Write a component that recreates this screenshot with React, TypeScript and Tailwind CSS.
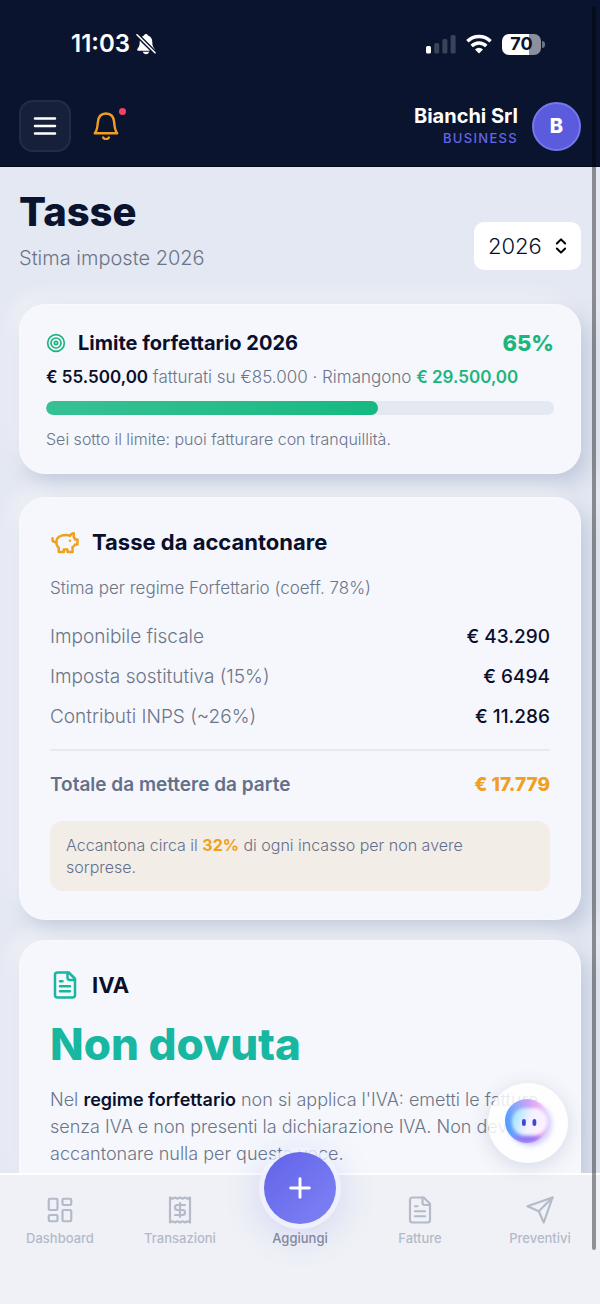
import React, { useState } from 'react';
import { ChevronsUpDown, LayoutDashboard, Plus, Target } from 'lucide-react';
import { clsx } from 'clsx';

interface IconProps {
  className?: string;
  strokeWidth?: number;
}

const StrokeIcon: React.FC<IconProps & { children: React.ReactNode }> = ({ className, strokeWidth = 2, children }) => (
  <svg
    viewBox="0 0 24 24"
    fill="none"
    stroke="currentColor"
    strokeWidth={strokeWidth}
    strokeLinecap="round"
    strokeLinejoin="round"
    className={className}
    aria-hidden="true"
  >
    {children}
  </svg>
);

const PiggyIcon: React.FC<IconProps> = (props) => (
  <StrokeIcon {...props}>
    <path d="M19 5c-1.5 0-2.8 1.4-3 2-3.5-1.5-11-.3-11 5 0 1.8 0 3 2 4.5V20h4v-2h3v2h4v-4c1-.5 1.7-1 2-2h2v-4h-2c0-1-.5-1.5-1-2V5z" />
    <path d="M2 9v1c0 1.1.9 2 2 2h1" />
    <path d="M16 11h.01" />
  </StrokeIcon>
);

const DocumentIcon: React.FC<IconProps> = (props) => (
  <StrokeIcon {...props}>
    <path d="M15 2H6a2 2 0 0 0-2 2v16a2 2 0 0 0 2 2h12a2 2 0 0 0 2-2V7Z" />
    <path d="M14 2v4a2 2 0 0 0 2 2h4" />
    <path d="M10 9H8M16 13H8M16 17H8" />
  </StrokeIcon>
);

const ReceiptIcon: React.FC<IconProps> = (props) => (
  <StrokeIcon {...props}>
    <path d="M4 2v20l2-1 2 1 2-1 2 1 2-1 2 1 2-1 2 1V2l-2 1-2-1-2 1-2-1-2 1-2-1-2 1Z" />
    <path d="M16 8h-6a2 2 0 1 0 0 4h4a2 2 0 1 1 0 4H8" />
    <path d="M12 17.5v-11" />
  </StrokeIcon>
);

const SendIcon: React.FC<IconProps> = (props) => (
  <StrokeIcon {...props}>
    <path d="m22 2-7 20-4-9-9-4Z" />
    <path d="M22 2 11 13" />
  </StrokeIcon>
);

const StatusBar = () => (
  <div className="flex items-center justify-between pt-7 pr-[55px] pl-[71px]">
    <div className="flex items-center gap-1.5 text-2xl leading-8 font-semibold text-white">
      <span>11:03</span>
      <svg viewBox="0 0 20 22" className="h-[22px] w-5" aria-hidden="true">
        <path d="M10 1c1 0 1.800.7 2 1.600 2.900.9 4.300 3.300 4.300 6.400 0 4 1 5.200 2.200 6.700.7 1 .3 2-.9 2H2.400c-1.200 0-1.600-1-.9-2C2.700 14.200 3.700 13 3.700 9c0-3.100 1.400-5.500 4.300-6.400C8.200 1.700 9 1 10 1Z" fill="#fff" />
        <path d="M6.800 18.700h6.400c-.4 1.500-1.600 2.500-3.200 2.500s-2.800-1-3.200-2.500Z" fill="#fff" />
        <path d="M.8 1.600 19 19.800" stroke="#0a142e" strokeWidth="4.400" />
        <path d="M1 1.800 19 19.800" stroke="#fff" strokeWidth="1.600" strokeLinecap="round" />
      </svg>
    </div>
    <div className="flex items-center gap-2.5">
      <svg viewBox="0 0 30 20" className="h-5 w-[30px]" aria-hidden="true">
        <rect x="0" y="12" width="5" height="7.500" rx="1.500" fill="#fff" />
        <rect x="8.200" y="9" width="5" height="10.500" rx="1.500" fill="#3b4359" />
        <rect x="16.400" y="5" width="5" height="14.500" rx="1.500" fill="#3b4359" />
        <rect x="24.600" y="1" width="5" height="18.500" rx="1.500" fill="#3b4359" />
      </svg>
      <svg viewBox="0 0 26 20" className="h-5 w-[26px]" fill="none" stroke="#fff" strokeWidth="3.400" aria-hidden="true">
        <path d="M1.400 7.300a16.400 16.400 0 0 1 23.200 0" />
        <path d="M5.700 12a10.300 10.300 0 0 1 14.600 0" />
        <path d="M13 19.500 9 15.400a5.700 5.700 0 0 1 8 0Z" fill="#fff" stroke="none" />
      </svg>
      <div className="flex items-center gap-px">
        <div className="flex h-[21px] w-[39px] items-center justify-center rounded-[7px] bg-[linear-gradient(90deg,#fff_70%,#8a909c_70%)] text-lg leading-5 font-bold text-[#0a142e]">
          70
        </div>
        <div className="h-[7px] w-[3px] rounded-r-full bg-[#6b7280]" />
      </div>
    </div>
  </div>
);

const Header = () => (
  <header className="shrink-0 border-b border-[#050a1c] bg-[#0a142e]">
    <StatusBar />
    <div className="mt-10 mb-3.5 flex items-center justify-between px-[19px]">
      <div className="flex items-center gap-[22px]">
        <button
          type="button"
          aria-label="Menu"
          className="flex size-[52px] items-center justify-center rounded-[14px] border-2 border-[#232c47] bg-[#17203a] text-white"
        >
          <svg viewBox="0 0 24 20" className="h-5 w-6" stroke="currentColor" strokeWidth="2.500" strokeLinecap="round" aria-hidden="true">
            <path d="M2 2.500h20M2 10h20M2 17.500h20" />
          </svg>
        </button>
        <button type="button" aria-label="Notifiche" className="relative text-[#f0a020]">
          <svg viewBox="0 0 26 28" className="h-7 w-[26px]" fill="none" stroke="currentColor" strokeWidth="2.400" strokeLinecap="round" strokeLinejoin="round" aria-hidden="true">
            <path d="M1.800 21.300c2.400-3 2.700-6.300 3-10.800C5.200 4.800 8.300 1.500 13 1.500s7.800 3.300 8.200 9c.3 4.500.6 7.800 3 10.800Z" />
            <path d="M10.200 25.600c.6 1 1.600 1.500 2.800 1.500s2.200-.5 2.800-1.500" />
          </svg>
          <span className="absolute -top-1 -right-[7px] size-[7px] rounded-full bg-[#ef4466]" />
        </button>
      </div>
      <div className="flex items-center gap-3.5">
        <div className="text-right">
          <p className="text-xl leading-6 font-bold text-white">Bianchi Srl</p>
          <p className="text-[13px] leading-5 font-medium tracking-widest text-[#6366e8]">BUSINESS</p>
        </div>
        <div className="flex size-[49px] items-center justify-center rounded-full border-2 border-[#7578ea] bg-[#5b5bdd] text-xl font-extrabold text-white">
          B
        </div>
      </div>
    </div>
  </header>
);

const Card: React.FC<{ className?: string; children: React.ReactNode }> = ({ className, children }) => (
  <section
    className={clsx(
      'rounded-[26px] border border-[#f8fafd] bg-[#f5f7fc] shadow-[8px_10px_22px_#c0c9db,-8px_-8px_18px_rgba(245,247,250,0.7)]',
      className
    )}
  >
    {children}
  </section>
);

const taxRows = [
  { label: 'Imponibile fiscale', value: '€ 43.290' },
  { label: 'Imposta sostitutiva (15%)', value: '€ 6494' },
  { label: 'Contributi INPS (~26%)', value: '€ 11.286' }
];

const LimitCard = () => {
  const percent = 65.3;

  return (
    <Card className="px-[26px] pt-6 pb-[22px]">
      <div className="flex items-center justify-between leading-7">
        <div className="flex items-center gap-3">
          <Target className="size-5 text-[#1db57f]" />
          <h2 className="text-xl leading-7 font-bold text-[#0a0f2c]">Limite forfettario 2026</h2>
        </div>
        <span className="text-[22px] font-extrabold text-[#1bb57d]">65%</span>
      </div>
      <p className="mt-2 text-[17px] leading-6 font-light text-[#6b7588]">
        <strong className="font-semibold text-[#0a0f2c]">€ 55.500,00</strong> fatturati su €85.000 · Rimangono{' '}
        <strong className="font-semibold text-[#1bb57d]">€ 29.500,00</strong>
      </p>
      <div className="mt-3 h-3.5 overflow-hidden rounded-full bg-[#e4e8f1]">
        <div className="h-full rounded-full bg-linear-to-r from-[#36c194] to-[#14b981]" style={{ width: `${percent}%` }} />
      </div>
      <p className="mt-3 text-base leading-6 font-light text-[#6b7588]">
        Sei sotto il limite: puoi fatturare con tranquillità.
      </p>
    </Card>
  );
};

const SavingsCard = () => (
  <Card className="mt-[23px] px-[30px] pt-[30px] pb-7">
    <div className="flex h-7 items-center gap-3">
      <PiggyIcon className="size-[30px] text-[#f0a01e]" />
      <h2 className="text-[22px] leading-7 font-bold text-[#0a0f2c]">Tasse da accantonare</h2>
    </div>
    <p className="mt-5 mb-[17px] text-[17px] leading-6 font-light text-[#6b7588]">Stima per regime Forfettario (coeff. 78%)</p>
    <dl>
      {taxRows.map((row) => (
        <div key={row.label} className="flex h-10 items-center justify-between text-[19px]">
          <dt className="font-light text-[#6b7588]">{row.label}</dt>
          <dd className="font-medium text-[#0a0f2c]">{row.value}</dd>
        </div>
      ))}
      <div className="mt-3 flex items-center justify-between border-t-2 border-[#e6eaf0] pt-5 text-[19px] leading-7">
        <dt className="font-semibold text-[#64708a]">Totale da mettere da parte</dt>
        <dd className="font-extrabold text-[#f0a01e]">€ 17.779</dd>
      </div>
    </dl>
    <div className="mt-[22px] rounded-xl bg-[#f3ede8] px-4 py-[13px] text-base leading-[22px] font-light text-[#64708a]">
      Accantona circa il <strong className="font-bold text-[#f0a01e]">32%</strong> di ogni incasso per non avere sorprese.
    </div>
  </Card>
);

const VatCard = () => (
  <Card className="mt-5 p-[30px]">
    <div className="flex h-7 items-center gap-3">
      <DocumentIcon className="size-[30px] text-[#18b7a2]" />
      <h2 className="text-[22px] leading-7 font-bold text-[#0a0f2c]">IVA</h2>
    </div>
    <p className="mt-5 text-[44px] leading-[50px] font-extrabold text-[#18b7a2]">Non dovuta</p>
    <p className="mt-[17px] text-lg leading-[27px] font-light text-[#6b7588]">
      Nel <strong className="font-semibold text-[#0a0f2c]">regime forfettario</strong> non si applica l'IVA: emetti le fatture
      senza IVA e non presenti la dichiarazione IVA. Non devi accantonare nulla per questa voce.
    </p>
  </Card>
);

const BotFace = () => (
  <svg viewBox="0 0 56 56" className="size-14" aria-hidden="true">
    <defs>
      <linearGradient id="botRing" x1="0" y1="0.6" x2="1" y2="0.4">
        <stop offset="0" stopColor="#4a9cff" />
        <stop offset="0.3" stopColor="#88a8fb" />
        <stop offset="0.6" stopColor="#c9a3f6" />
        <stop offset="0.8" stopColor="#ebb0f5" />
        <stop offset="1" stopColor="#e2deff" />
      </linearGradient>
      <linearGradient id="botFill" x1="0" y1="0.3" x2="1" y2="0.6">
        <stop offset="0" stopColor="#9fe4ff" />
        <stop offset="0.5" stopColor="#f4f2ff" />
        <stop offset="1" stopColor="#fdf1ff" />
      </linearGradient>
      <filter id="botSoft" x="-30%" y="-30%" width="160%" height="160%">
        <feGaussianBlur stdDeviation="1.500" />
      </filter>
      <filter id="botGlow" x="-30%" y="-30%" width="160%" height="160%">
        <feGaussianBlur stdDeviation="2.500" />
      </filter>
    </defs>
    <circle cx="30" cy="29" r="22" fill="#c4bdff" opacity="0.7" filter="url(#botGlow)" />
    <circle cx="27" cy="26" r="22" fill="url(#botRing)" />
    <path d="M13 40c4 5 8 7 14 7s10-2 14-7c-8 3-20 3-28 0Z" fill="#9a70f2" filter="url(#botSoft)" />
    <rect x="12" y="13" width="35" height="27" rx="13" fill="url(#botFill)" filter="url(#botSoft)" />
    <rect x="22" y="24" width="3.800" height="7" rx="1.900" fill="#4048cf" />
    <rect x="32.500" y="24" width="3.800" height="7" rx="1.900" fill="#4048cf" />
  </svg>
);

const navLeft = [
  { label: 'Dashboard', icon: <LayoutDashboard className="size-[30px]" strokeWidth={1.75} /> },
  { label: 'Transazioni', icon: <ReceiptIcon className="size-[30px]" strokeWidth={1.75} /> }
];

const navRight = [
  { label: 'Fatture', icon: <DocumentIcon className="size-[30px]" strokeWidth={1.75} /> },
  { label: 'Preventivi', icon: <SendIcon className="size-[30px]" strokeWidth={1.75} /> }
];

const NavItem: React.FC<{ label: string; icon: React.ReactNode }> = ({ label, icon }) => (
  <a href="#" className="flex flex-1 flex-col items-center gap-1 text-[#b4bac9]">
    {icon}
    <span className="text-[13px] leading-[18px] font-medium">{label}</span>
  </a>
);

const BottomNav = () => (
  <nav className="relative z-10 flex shrink-0 border-t-2 border-white bg-[#eff1f6] pt-5 pb-[57px]">
    {navLeft.map((item) => (
      <NavItem key={item.label} {...item} />
    ))}
    <button type="button" className="relative flex flex-1 flex-col items-center justify-end text-[#8088a0]">
      <span className="absolute bottom-[18px] left-1/2 flex size-[82px] -translate-x-1/2 items-center justify-center rounded-full bg-[#eef1fc]/80 shadow-[0_6px_36px_rgba(99,102,241,0.2)]">
        <span className="flex size-[72px] items-center justify-center rounded-full bg-linear-to-br from-[#6263e9] to-[#7f82f3] text-white">
          <Plus className="size-8" strokeWidth={2.2} />
        </span>
      </span>
      <span className="relative text-[13px] leading-[18px] font-medium">Aggiungi</span>
    </button>
    {navRight.map((item) => (
      <NavItem key={item.label} {...item} />
    ))}
    <button
      type="button"
      aria-label="Assistente"
      className="absolute right-8 bottom-full mb-3 flex size-20 items-center justify-center rounded-full bg-white/85 shadow-[0_4px_20px_rgba(60,70,110,0.16)]"
    >
      <BotFace />
    </button>
  </nav>
);

const App: React.FC = () => {
  const [year, setYear] = useState('2026');

  return (
    <div className="relative flex h-dvh flex-col overflow-hidden bg-[#e4e8f2] font-['Inter',sans-serif]">
      <Header />
      <main className="min-h-0 flex-1 overflow-y-auto px-[19px] pt-5 pb-10 [scrollbar-width:none]">
        <div className="mb-8 flex items-end justify-between">
          <div>
            <h1 className="text-[40px] leading-[50px] font-extrabold text-[#0a142e]">Tasse</h1>
            <p className="mt-[7px] text-xl leading-7 font-light text-[#6b7588]">Stima imposte {year}</p>
          </div>
          <div className="relative mb-0.5">
            <select
              aria-label="Anno"
              value={year}
              onChange={(e) => setYear(e.target.value)}
              className="h-12 w-[107px] appearance-none rounded-[10px] bg-white pl-3.5 text-[22px] font-light text-[#0a0f2c]"
            >
              <option>2026</option>
              <option>2025</option>
              <option>2024</option>
            </select>
            <ChevronsUpDown className="pointer-events-none absolute top-3.5 right-2.5 size-5 text-black" strokeWidth={2.4} />
          </div>
        </div>
        <LimitCard />
        <SavingsCard />
        <VatCard />
      </main>
      <BottomNav />
      <div className="pointer-events-none absolute top-1.5 right-1 bottom-[54px] z-20 w-1 rounded-full bg-black/40" />
    </div>
  );
};

export default App;
